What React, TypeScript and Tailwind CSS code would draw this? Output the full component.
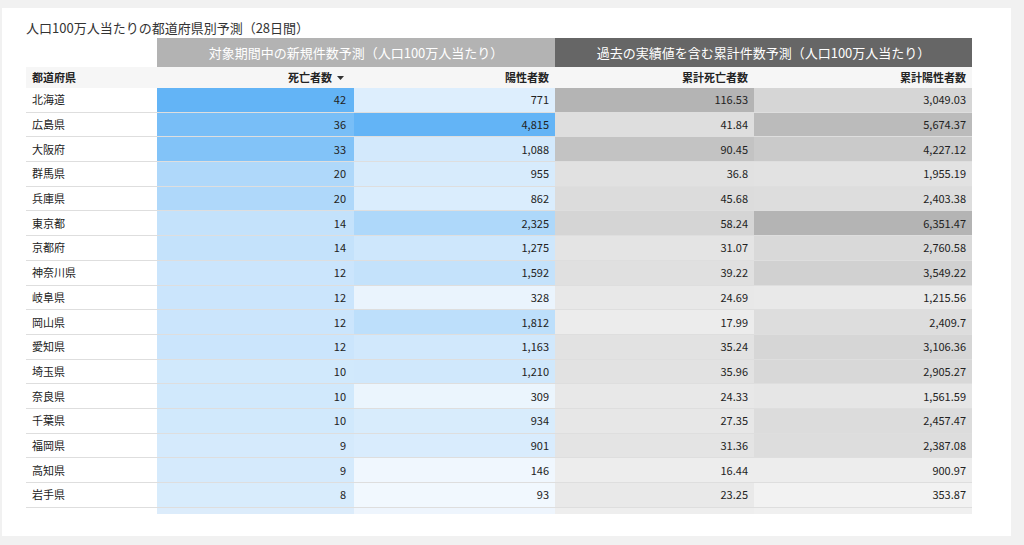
import React from "react";

const rows: [string, number, number, number, number][] = [
  ["北海道", 42, 771, 116.53, 3049.03],
  ["広島県", 36, 4815, 41.84, 5674.37],
  ["大阪府", 33, 1088, 90.45, 4227.12],
  ["群馬県", 20, 955, 36.8, 1955.19],
  ["兵庫県", 20, 862, 45.68, 2403.38],
  ["東京都", 14, 2325, 58.24, 6351.47],
  ["京都府", 14, 1275, 31.07, 2760.58],
  ["神奈川県", 12, 1592, 39.22, 3549.22],
  ["岐阜県", 12, 328, 24.69, 1215.56],
  ["岡山県", 12, 1812, 17.99, 2409.7],
  ["愛知県", 12, 1163, 35.24, 3106.36],
  ["埼玉県", 10, 1210, 35.96, 2905.27],
  ["奈良県", 10, 309, 24.33, 1561.59],
  ["千葉県", 10, 934, 27.35, 2457.47],
  ["福岡県", 9, 901, 31.36, 2387.08],
  ["高知県", 9, 146, 16.44, 900.97],
  ["岩手県", 8, 93, 23.25, 353.87],
];

const mix = (a: number[], b: number[], t: number) =>
  `rgb(${a.map((v, i) => Math.round(v + (b[i] - v) * t)).join(",")})`;
const BLUE_HI = [99, 180, 246];
const BLUE_LO = [244, 249, 254];
const GRAY_HI = [180, 180, 180];
const GRAY_LO = [246, 246, 246];
const scale = (v: number, lo: number, hi: number) => (v - lo) / (hi - lo);

const fmt2 = (n: number) =>
  n.toLocaleString("en-US", { maximumFractionDigits: 2 });

export default function App() {
  const cols = [
    { lo: 0, hi: 42, hiC: BLUE_HI, loC: BLUE_LO },
    { lo: 0, hi: 4815, hiC: BLUE_HI, loC: BLUE_LO },
    { lo: 0, hi: 116.53, hiC: GRAY_HI, loC: GRAY_LO },
    { lo: 0, hi: 6351.47, hiC: GRAY_HI, loC: GRAY_LO },
  ];
  const bg = (ci: number, v: number) => {
    const c = cols[ci];
    return mix(c.loC, c.hiC, Math.pow(scale(v, c.lo, c.hi), 1));
  };
  return (
    <div
      className="w-[1024px] h-[545px] bg-[#f1f1f1] pt-[8px] pl-[2px]"
      style={{ fontFamily: '"Noto Sans CJK JP", "Noto Sans", sans-serif' }}
    >
      <div className="w-[1009px] h-[528px] bg-white pl-[24px] pt-[10px]">
        <div className="text-[13px] text-[#333] leading-[20px] h-[20px]">
          人口100万人当たりの都道府県別予測（28日間）
        </div>
        <div className="w-[946px] text-[11px] text-[#222]">
          <div className="flex h-[29px]">
            <div className="w-[131px]" />
            <div className="w-[398px] bg-[#b3b3b3] text-white text-[13px] flex items-center justify-center">
              対象期間中の新規件数予測（人口100万人当たり）
            </div>
            <div className="w-[417px] bg-[#666666] text-white text-[13px] flex items-center justify-center">
              過去の実績値を含む累計件数予測（人口100万人当たり）
            </div>
          </div>
          <div className="flex h-[21px] bg-[#f6f6f6] font-bold items-center">
            <div className="w-[131px] pl-[6px]">都道府県</div>
            <div className="w-[197px] text-right pr-[10px] flex items-center justify-end gap-[5px]">
              死亡者数
              <svg width="7" height="4" viewBox="0 0 7 4"><path d="M0 0h7L3.5 4z" fill="#333" /></svg>
            </div>
            <div className="w-[201px] text-right pr-[6px]">陽性者数</div>
            <div className="w-[199px] text-right pr-[6px]">累計死亡者数</div>
            <div className="w-[218px] text-right pr-[6px]">累計陽性者数</div>
          </div>
          {rows.map((r) => (
            <div key={r[0]} className="flex h-[24.7px] items-center border-b border-[#dedede] text-[11px] leading-none">
              <div className="w-[131px] pl-[6px] h-full flex items-center">{r[0]}</div>
              <div className="w-[197px] h-full flex items-center justify-end pr-[8px]" style={{ background: bg(0, r[1]) }}>{r[1]}</div>
              <div className="w-[201px] h-full flex items-center justify-end pr-[6px]" style={{ background: bg(1, r[2]) }}>{r[2].toLocaleString("en-US")}</div>
              <div className="w-[199px] h-full flex items-center justify-end pr-[6px]" style={{ background: bg(2, r[3]) }}>{fmt2(r[3])}</div>
              <div className="w-[218px] h-full flex items-center justify-end pr-[6px]" style={{ background: bg(3, r[4]) }}>{fmt2(r[4])}</div>
            </div>
          ))}
          <div className="flex h-[6px]">
            <div className="w-[131px]" />
            <div className="w-[197px] bg-[#dcecfb]" />
            <div className="w-[201px] bg-[#eef5fd]" />
            <div className="w-[199px] bg-[#eeeeee]" />
            <div className="w-[218px] bg-[#f0f0f0]" />
          </div>
        </div>
      </div>
    </div>
  );
}
